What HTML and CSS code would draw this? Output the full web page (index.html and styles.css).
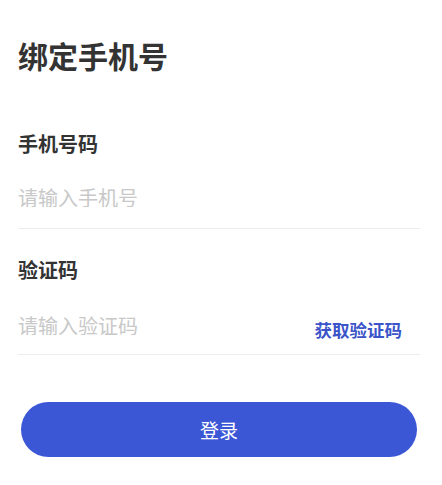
FILE: index.html
```html
<!DOCTYPE html>
<html lang="zh-CN">
<head>
    <meta charset="UTF-8">
    <meta name="viewport" content="width=device-width, initial-scale=1.0">
    <title>绑定手机号</title>
    <link rel="stylesheet" href="styles.css">
</head>
<body>

    <div class="page">
        <h1 class="title">绑定手机号</h1>

        <form id="bindForm">
            <label class="field-label" for="phone">手机号码</label>
            <div class="field-row">
                <input id="phone" type="tel" placeholder="请输入手机号">
            </div>

            <label class="field-label second" for="code">验证码</label>
            <div class="field-row code-row">
                <input id="code" type="text" placeholder="请输入验证码">
                <a class="code-link" href="#">获取验证码</a>
            </div>

            <button type="button" class="submit-btn">登录</button>
        </form>
    </div>

</body>
</html>
```

FILE: styles.css
```css
body {
    font-family: "Noto Sans CJK SC", "Noto Sans", sans-serif;
    margin: 0;
    padding: 0;
    background-color: #fff;
}

.page {
    padding: 40px 22px 0 18px;
}

.title {
    margin: 0;
    font-size: 30px;
    line-height: 30px;
    font-weight: 700;
    color: #333;
}

form {
    display: flex;
    flex-direction: column;
}

.field-label {
    margin-top: 64px;
    font-size: 20px;
    line-height: 20px;
    font-weight: 700;
    color: #333;
}

.field-label.second {
    margin-top: 31px;
}

.field-row {
    display: flex;
    align-items: flex-start;
    padding: 33px 0 21px;
    border-bottom: 1px solid #ececec;
}

.code-row {
    padding: 35px 0 14px;
}

.field-row input {
    flex: 1;
    min-width: 0;
    border: none;
    outline: none;
    padding: 0;
    height: 20px;
    font-family: inherit;
    font-size: 20px;
    line-height: 20px;
    color: #333;
}

.field-row input::placeholder {
    color: #c8c8c8;
}

.code-link {
    margin: 5px 18px 0 0;
    font-size: 17.5px;
    line-height: 20px;
    font-weight: 700;
    color: #3b54c9;
    text-decoration: none;
}

.submit-btn {
    margin: 47px 3px 0;
    height: 55px;
    border: none;
    border-radius: 28px;
    background-color: #3b57d6;
    color: white;
    font-family: inherit;
    font-size: 19px;
    cursor: pointer;
}

.submit-btn:hover {
    background-color: #3450c9;
}
```
